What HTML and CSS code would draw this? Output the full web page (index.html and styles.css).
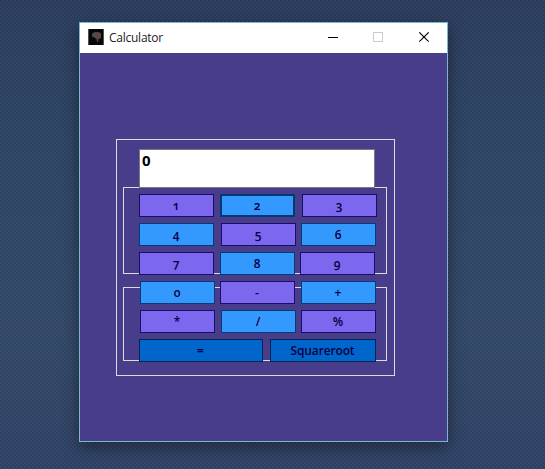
FILE: index.html
```html
<!DOCTYPE html>
<html lang="en">
<head>
<meta charset="utf-8">
<title>Calculator</title>
<link rel="stylesheet" href="styles.css">
</head>
<body>
<main class="window">
  <header class="titlebar">
    <svg class="app-icon" viewBox="0 0 16 16"><rect width="16" height="16" fill="#070809"/><path d="M0 0H.8V16H0ZM15.200 0H16V16H15.200Z" fill="#666"/><path d="M4 6C4 3.500 7 3 9 3.200C12 3 13.500 5.500 13 7.500C13.500 9 12 10 10.500 9.800L10.200 13H9L8.500 10C7 9.500 7 8.500 6 8.300C4.500 8.200 3.800 7 4 6Z" fill="#63433f"/><path d="M4 6C4 3.500 7 3 9 3.200L8 5.500L5 7.500Z" fill="#464d66"/><path d="M9.500 3.300C12 3 13.400 5 13.200 6.500L11 5Z" fill="#3c5b50"/></svg>
    <h1 class="title">Calculator</h1>
    <svg class="controls" viewBox="0 0 102 11" shape-rendering="crispEdges"><path d="M0 5.500H10" stroke="#000"/><rect x="45.500" y=".5" width="9" height="9" fill="none" stroke="#ccc"/><path d="M91.300 .3L100.700 9.700M100.700 .3L91.300 9.700" stroke="#000" stroke-width="1.100" shape-rendering="auto"/></svg>
  </header>
  <section class="calculator">
    <output class="display">0</output>
    <div class="group digits">
      <div class="row"><button class="key violet">1</button><button class="key blue focused">2</button><button class="key violet gap-7">3</button></div>
      <div class="row"><button class="key blue">4</button><button class="key violet gap-7">5</button><button class="key blue gap-5">6</button></div>
      <div class="row"><button class="key violet">7</button><button class="key blue">8</button><button class="key violet gap-5">9</button></div>
    </div>
    <div class="group operators">
      <div class="row inset"><button class="key blue">0</button><button class="key violet gap-5">-</button><button class="key blue">+</button></div>
      <div class="row inset"><button class="key violet">*</button><button class="key blue">/</button><button class="key violet gap-5">%</button></div>
      <div class="row"><button class="key deep equals">=</button><button class="key deep root gap-7">Squareroot</button></div>
    </div>
  </section>
</main>
</body>
</html>
```
FILE: styles.css
```css
* { box-sizing: border-box; }
body {
  margin: 0;
  height: 469px;
  padding: 22px 0 0 79px;
  overflow: hidden;
  font-family: "Open Sans", "Noto Sans", sans-serif;
  background:
    radial-gradient(circle at 1px 1px, rgba(15, 25, 45, .22) 0.6px, transparent 1px) 0 0 / 4px 4px,
    radial-gradient(circle at 3px 3px, rgba(15, 25, 45, .22) 0.6px, transparent 1px) 0 0 / 4px 4px,
    linear-gradient(#304263, #334a6b 30%, #384e6e 70%, #34486b);
}
.window {
  width: 369px;
  height: 420px;
  border: 1px solid #79b8cc;
  background: #483d8b;
  box-shadow: 0 5px 16px rgba(0, 0, 0, .42);
}
.titlebar {
  display: flex;
  align-items: center;
  height: 30px;
  padding: 0 17px 0 8px;
  background: #fff;
}
.app-icon { width: 16px; height: 16px; margin-top: -2px; }
.title {
  margin: 0 auto 0 5px;
  font-size: 12px;
  font-weight: 400;
  line-height: 16px;
  letter-spacing: -.25px;
  color: #222;
}
.controls { width: 102px; height: 11px; margin-top: -1px; }
.calculator {
  width: 279px;
  height: 237px;
  margin: 86px 0 0 36px;
  padding: 9px 6px 0;
  border: 1px solid #dcdcdc;
}
.display {
  display: block;
  position: relative;
  width: 236px;
  height: 39px;
  margin: 0 0 -1px 16px;
  padding-left: 2px;
  border: 1px solid #7a7a7a;
  background: #fff;
  color: #000;
  font-size: 15px;
  font-weight: 700;
  line-height: 20px;
}
.group {
  display: flex;
  flex-direction: column;
  gap: 6px;
  width: 264px;
  padding-left: 15px;
  border: 1px solid #dcdcdc;
}
.digits { height: 87px; padding-top: 6px; }
.operators { height: 74px; margin-top: 13px; }
.operators .row:first-child { margin-top: -7px; }
.row { display: flex; flex: none; }
.inset { padding-left: 1px; }
.key {
  width: 75px;
  height: 23px;
  padding: 0 1px 0 0;
  border: 1px solid;
  font: 600 12px/21px "Open Sans", "Noto Sans", sans-serif;
  font-variant-numeric: oldstyle-nums;
  color: #08003f;
}
.key + .key { margin-left: 6px; }
.key + .gap-5 { margin-left: 5px; }
.key + .gap-7 { margin-left: 7px; }
.violet { background: #7b68ee; border-color: #1d0b6b; }
.blue { background: #3399ff; border-color: #073b74; }
.focused { border: 2px solid #003a70; line-height: 19px; }
.deep { background: #0066cc; border-color: #00264d; }
.equals { width: 124px; }
.root { width: 106px; letter-spacing: -.15px; }
```
